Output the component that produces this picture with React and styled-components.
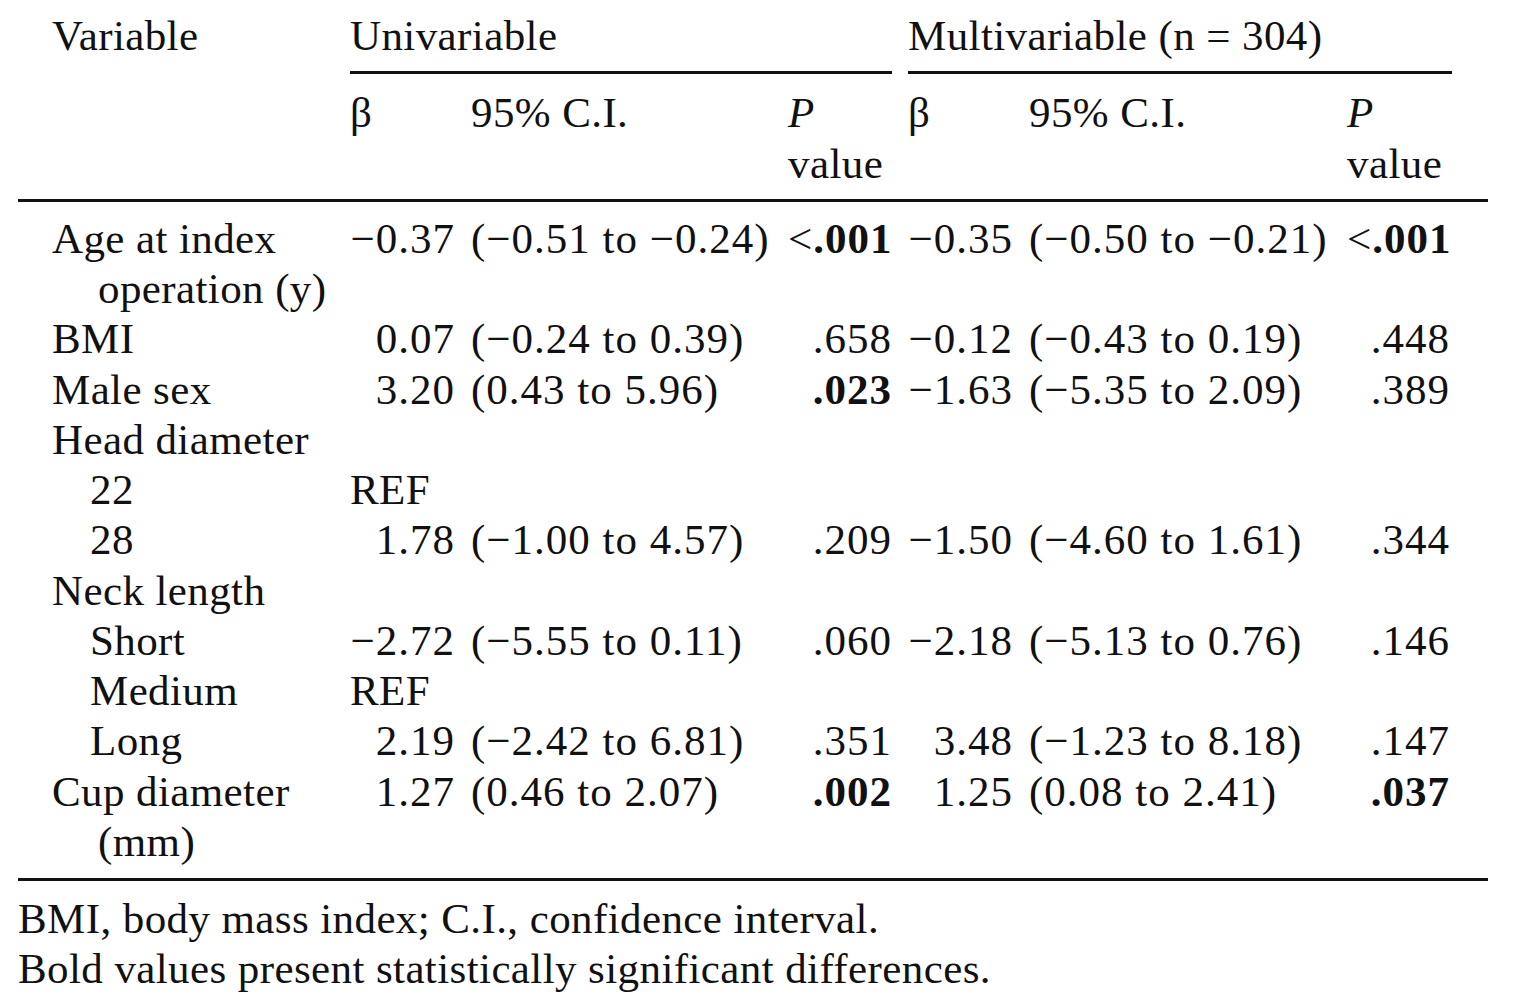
import styled, { createGlobalStyle } from "styled-components";

const GlobalStyle = createGlobalStyle`
  html, body {
    margin: 0;
    padding: 0;
    background: #ffffff;
  }
  body {
    font-family: "Liberation Serif", "DejaVu Serif", serif;
    color: #111111;
  }
`;

const Page = styled.div`
  padding: 11px 0 0 18px;
  width: 1470px;
`;

const Table = styled.table`
  border-collapse: collapse;
  table-layout: fixed;
  width: 1470px;
  font-size: 43px;
  line-height: 50.25px;
  letter-spacing: 0.4px;
`;

const HeadCell = styled.th`
  font-weight: normal;
  text-align: left;
  vertical-align: top;
  padding: ${(p) => (p.$first ? "0 8px 0 34px" : "0 8px")};
  padding-bottom: ${(p) => (p.$rule ? "10px" : "0")};
  padding-top: ${(p) => (p.$second ? "14px" : "0")};
  border-bottom: ${(p) => (p.$rule ? "3px solid #111" : "none")};
`;

const GroupLabel = styled.div`
  padding-bottom: 10px;
  border-bottom: 3px solid #111;
`;

const Cell = styled.td`
  padding: 0 8px;
  padding-left: ${(p) => (p.$indent ? `${p.$indent}px` : "8px")};
  padding-right: ${(p) => (p.$last ? "38px" : "8px")};
  text-indent: ${(p) => (p.$hang ? `-${p.$hang}px` : "0")};
  text-align: ${(p) => (p.$right ? "right" : "left")};
  vertical-align: top;
  white-space: ${(p) => (p.$num ? "nowrap" : "normal")};
  letter-spacing: ${(p) => (p.$num ? "1px" : "0.4px")};
`;

const BodyRow = styled.tr`
  & > td {
    padding-top: ${(p) => (p.$firstRow ? "12px" : "0")};
    padding-bottom: ${(p) => (p.$lastRow ? "11px" : "0")};
    border-bottom: ${(p) => (p.$lastRow ? "3px solid #111" : "none")};
  }
`;

const Strong = styled.b`
  font-weight: bold;
`;

const Ital = styled.i`
  font-style: italic;
`;

const Notes = styled.div`
  font-size: 43px;
  line-height: 50px;
  letter-spacing: 0.4px;
  margin-top: 13px;
`;

const M = "\u2212";

const rows = [
  {
    label: ["Age at index", "operation (y)"],
    u: [`${M}0.37`, `(${M}0.51 to ${M}0.24)`, "<.001", true],
    m: [`${M}0.35`, `(${M}0.50 to ${M}0.21)`, "<.001", true],
  },
  {
    label: ["BMI"],
    u: ["0.07", `(${M}0.24 to 0.39)`, ".658", false],
    m: [`${M}0.12`, `(${M}0.43 to 0.19)`, ".448", false],
  },
  {
    label: ["Male sex"],
    u: ["3.20", "(0.43 to 5.96)", ".023", true],
    m: [`${M}1.63`, `(${M}5.35 to 2.09)`, ".389", false],
  },
  { label: ["Head diameter"] },
  { label: ["22"], sub: true, ref: true },
  {
    label: ["28"],
    sub: true,
    u: ["1.78", `(${M}1.00 to 4.57)`, ".209", false],
    m: [`${M}1.50`, `(${M}4.60 to 1.61)`, ".344", false],
  },
  { label: ["Neck length"] },
  {
    label: ["Short"],
    sub: true,
    u: [`${M}2.72`, `(${M}5.55 to 0.11)`, ".060", false],
    m: [`${M}2.18`, `(${M}5.13 to 0.76)`, ".146", false],
  },
  { label: ["Medium"], sub: true, ref: true },
  {
    label: ["Long"],
    sub: true,
    u: ["2.19", `(${M}2.42 to 6.81)`, ".351", false],
    m: ["3.48", `(${M}1.23 to 8.18)`, ".147", false],
  },
  {
    label: ["Cup diameter", "(mm)"],
    u: ["1.27", "(0.46 to 2.07)", ".002", true],
    m: ["1.25", "(0.08 to 2.41)", ".037", true],
  },
];

function PValue({ value, bold }) {
  if (!bold) return value;
  if (value.startsWith("<")) {
    return (
      <>
        &lt;<Strong>{value.slice(1)}</Strong>
      </>
    );
  }
  return <Strong>{value}</Strong>;
}

function Group({ data, last }) {
  if (!data) {
    return (
      <>
        <Cell />
        <Cell />
        <Cell $last={last} />
      </>
    );
  }
  const [beta, ci, p, bold] = data;
  return (
    <>
      <Cell $right $num>
        {beta}
      </Cell>
      <Cell $num>{ci}</Cell>
      <Cell $right $num $last={last}>
        <PValue value={p} bold={bold} />
      </Cell>
    </>
  );
}

function DataRow({ row, index, total }) {
  const wrapped = row.label.length > 1;
  return (
    <BodyRow $firstRow={index === 0} $lastRow={index === total - 1}>
      <Cell
        $indent={row.sub ? 72 : wrapped ? 80 : 34}
        $hang={wrapped ? 46 : 0}
      >
        {row.label[0]}
        {wrapped && (
          <>
            <br />
            {row.label[1]}
          </>
        )}
      </Cell>
      {row.ref ? (
        <>
          <Cell>REF</Cell>
          <Cell />
          <Cell />
          <Cell />
          <Cell />
          <Cell $last />
        </>
      ) : (
        <>
          <Group data={row.u} />
          <Group data={row.m} last />
        </>
      )}
    </BodyRow>
  );
}

export default function App() {
  return (
    <Page>
      <GlobalStyle />
      <Table>
        <colgroup>
          <col style={{ width: 324 }} />
          <col style={{ width: 121 }} />
          <col style={{ width: 317 }} />
          <col style={{ width: 120 }} />
          <col style={{ width: 121 }} />
          <col style={{ width: 318 }} />
          <col style={{ width: 149 }} />
        </colgroup>
        <thead>
          <tr>
            <HeadCell $first $rule rowSpan={2}>
              Variable
            </HeadCell>
            <HeadCell colSpan={3}>
              <GroupLabel>Univariable</GroupLabel>
            </HeadCell>
            <HeadCell colSpan={3} style={{ paddingRight: 36 }}>
              <GroupLabel>Multivariable (n = 304)</GroupLabel>
            </HeadCell>
          </tr>
          <tr>
            <HeadCell $rule $second>β</HeadCell>
            <HeadCell $rule $second>95% C.I.</HeadCell>
            <HeadCell $rule $second>
              <Ital>P</Ital>
              <br />
              value
            </HeadCell>
            <HeadCell $rule $second>β</HeadCell>
            <HeadCell $rule $second>95% C.I.</HeadCell>
            <HeadCell $rule $second>
              <Ital>P</Ital>
              <br />
              value
            </HeadCell>
          </tr>
        </thead>
        <tbody>
          {rows.map((row, i) => (
            <DataRow key={i} row={row} index={i} total={rows.length} />
          ))}
        </tbody>
      </Table>
      <Notes>
        BMI, body mass index; C.I., confidence interval.
        <br />
        Bold values present statistically significant differences.
      </Notes>
    </Page>
  );
}
